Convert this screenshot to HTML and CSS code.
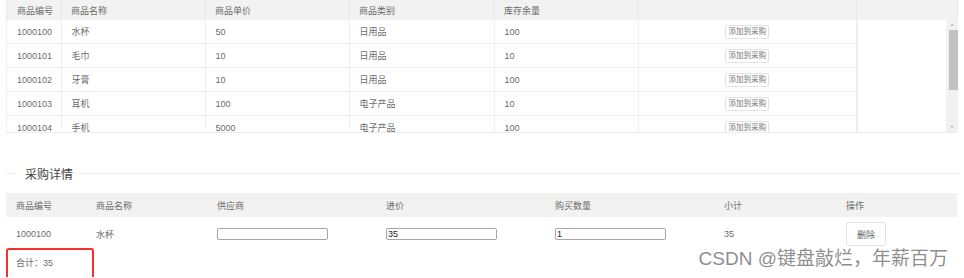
FILE: index.html
```html
<!doctype html>
<html lang="zh">
<head>
  <meta charset="UTF-8">
  <meta name="viewport" content="width=device-width, initial-scale=1.0">
  <title>采购</title>
  <link rel="stylesheet" href="styles.css">
</head>
<body>
  <div class="goods-grid">
    <table class="goods-head">
      <colgroup>
        <col style="width:54px"><col style="width:144px"><col style="width:144px"><col style="width:145px"><col style="width:144px"><col style="width:219px"><col>
      </colgroup>
      <tr>
        <th>商品编号</th><th>商品名称</th><th>商品单价</th><th>商品类别</th><th>库存余量</th><th></th><th></th>
      </tr>
    </table>
    <div class="goods-body">
      <div class="goods-scroll">
        <table class="goods">
          <colgroup>
            <col style="width:54px"><col style="width:144px"><col style="width:144px"><col style="width:145px"><col style="width:144px"><col>
          </colgroup>
          <tr><td>1000100</td><td>水杯</td><td>50</td><td>日用品</td><td>100</td><td class="op"><button class="add-btn">添加到采购</button></td></tr>
          <tr><td>1000101</td><td>毛巾</td><td>10</td><td>日用品</td><td>10</td><td class="op"><button class="add-btn">添加到采购</button></td></tr>
          <tr><td>1000102</td><td>牙膏</td><td>10</td><td>日用品</td><td>100</td><td class="op"><button class="add-btn">添加到采购</button></td></tr>
          <tr><td>1000103</td><td>耳机</td><td>100</td><td>电子产品</td><td>10</td><td class="op"><button class="add-btn">添加到采购</button></td></tr>
          <tr><td>1000104</td><td>手机</td><td>5000</td><td>电子产品</td><td>100</td><td class="op"><button class="add-btn">添加到采购</button></td></tr>
        </table>
      </div>
      <div class="blank"></div>
      <div class="scrollbar">
        <span class="arrow">&#9650;</span>
        <div class="track"><div class="thumb"></div></div>
        <span class="arrow">&#9660;</span>
      </div>
    </div>
  </div>

  <div class="field-title">
    <span class="line short"></span>
    <span class="legend">采购详情</span>
    <span class="line"></span>
  </div>

  <table class="detail">
    <colgroup>
      <col style="width:80px"><col style="width:121px"><col style="width:169px"><col style="width:169px"><col style="width:169px"><col style="width:122px"><col>
    </colgroup>
    <tr class="detail-head">
      <th>商品编号</th><th>商品名称</th><th>供应商</th><th>进价</th><th>购买数量</th><th>小计</th><th>操作</th>
    </tr>
    <tr>
      <td>1000100</td>
      <td>水杯</td>
      <td><input class="cell-input" type="text" value=""></td>
      <td><input class="cell-input" type="text" value="35"></td>
      <td><input class="cell-input" type="text" value="1"></td>
      <td>35</td>
      <td><button class="del-btn">删除</button></td>
    </tr>
  </table>

  <div class="total">
    合计：35
    <div class="mark"></div>
  </div>

  <div class="watermark">CSDN @键盘敲烂，年薪百万</div>
</body>
</html>
```

FILE: styles.css
```css
html {
  overflow: hidden;
}
body {
  margin: 0;
  padding: 0 6px;
  height: 278px;
  overflow: hidden;
  position: relative;
  font-family: "Liberation Sans", "Noto Sans CJK SC", sans-serif;
  font-size: 9px;
  color: #6b6b6b;
  background: #fff;
}
table {
  border-collapse: collapse;
  table-layout: fixed;
}
th, td {
  padding: 0 0 0 10px;
  text-align: left;
  font-weight: normal;
  white-space: nowrap;
  overflow: hidden;
}
.goods-grid {
  width: 952px;
}
.goods-head {
  width: 952px;
  background: #f2f2f2;
}
.goods-head th {
  height: 20px;
  border-left: 1px solid #e8e8e8;
  border-right: 1px solid #e8e8e8;
}
.goods-body {
  display: flex;
  height: 112px;
  border-bottom: 1px solid #ececec;
}
.goods-scroll {
  width: 850px;
  overflow: hidden;
  border-left: 1px solid #f0f0f0;
  border-right: 1px solid #ececec;
}
.goods {
  width: 850px;
}
.goods td {
  height: 23px;
  border-bottom: 1px solid #f0f0f0;
  border-right: 1px solid #f0f0f0;
}
.goods td.op {
  padding: 0;
  text-align: center;
}
.add-btn {
  width: 44px;
  height: 14px;
  padding: 0;
  border: 1px solid #e2e2e2;
  border-radius: 2px;
  background: #fff;
  color: #777;
  font-family: inherit;
  font-size: 7.5px;
  line-height: 12px;
}
.blank {
  flex: 1;
}
.scrollbar {
  width: 12px;
  display: flex;
  flex-direction: column;
  align-items: center;
  background: #f1f1f1;
}
.arrow {
  font-size: 4px;
  color: #a3a3a3;
  height: 10px;
  line-height: 10px;
}
.track {
  flex: 1;
  width: 100%;
  display: flex;
  justify-content: center;
}
.thumb {
  width: 9px;
  height: 60px;
  background: #c1c1c1;
  margin-left: 2px;
}
.field-title {
  display: flex;
  align-items: center;
  margin-top: 32px;
  height: 16px;
}
.line {
  flex: 1;
  height: 1px;
  background: #eee;
}
.line.short {
  flex: none;
  width: 10px;
}
.legend {
  padding: 0 8px 0 9px;
  font-size: 12px;
  color: #444;
}
.detail {
  width: 951px;
  margin-top: 12px;
}
.detail-head {
  background: #f2f2f2;
}
.detail-head th {
  height: 24px;
}
.detail td {
  height: 34px;
}
.cell-input {
  box-sizing: border-box;
  width: 111px;
  height: 12px;
  padding: 0 1px;
  margin: 0;
  border: 1px solid #a6a6a6;
  border-radius: 2px;
  font-family: inherit;
  font-size: 9px;
  color: #222;
  vertical-align: middle;
}
.del-btn {
  width: 40px;
  height: 24px;
  padding: 0;
  border: 1px solid #e2e2e2;
  border-radius: 2px;
  background: #fff;
  color: #666;
  font-family: inherit;
  font-size: 9px;
  vertical-align: middle;
}
.total {
  position: relative;
  height: 24px;
  line-height: 24px;
  padding-left: 10px;
}
.mark {
  position: absolute;
  left: 0;
  top: -3px;
  width: 84px;
  height: 27px;
  border: 2px solid #f5302a;
  border-bottom: none;
  border-radius: 3px 3px 0 0;
}
.watermark {
  position: absolute;
  right: 16px;
  top: 248px;
  font-size: 19px;
  line-height: 22px;
  color: rgba(120, 120, 120, 0.85);
  white-space: nowrap;
}
```
